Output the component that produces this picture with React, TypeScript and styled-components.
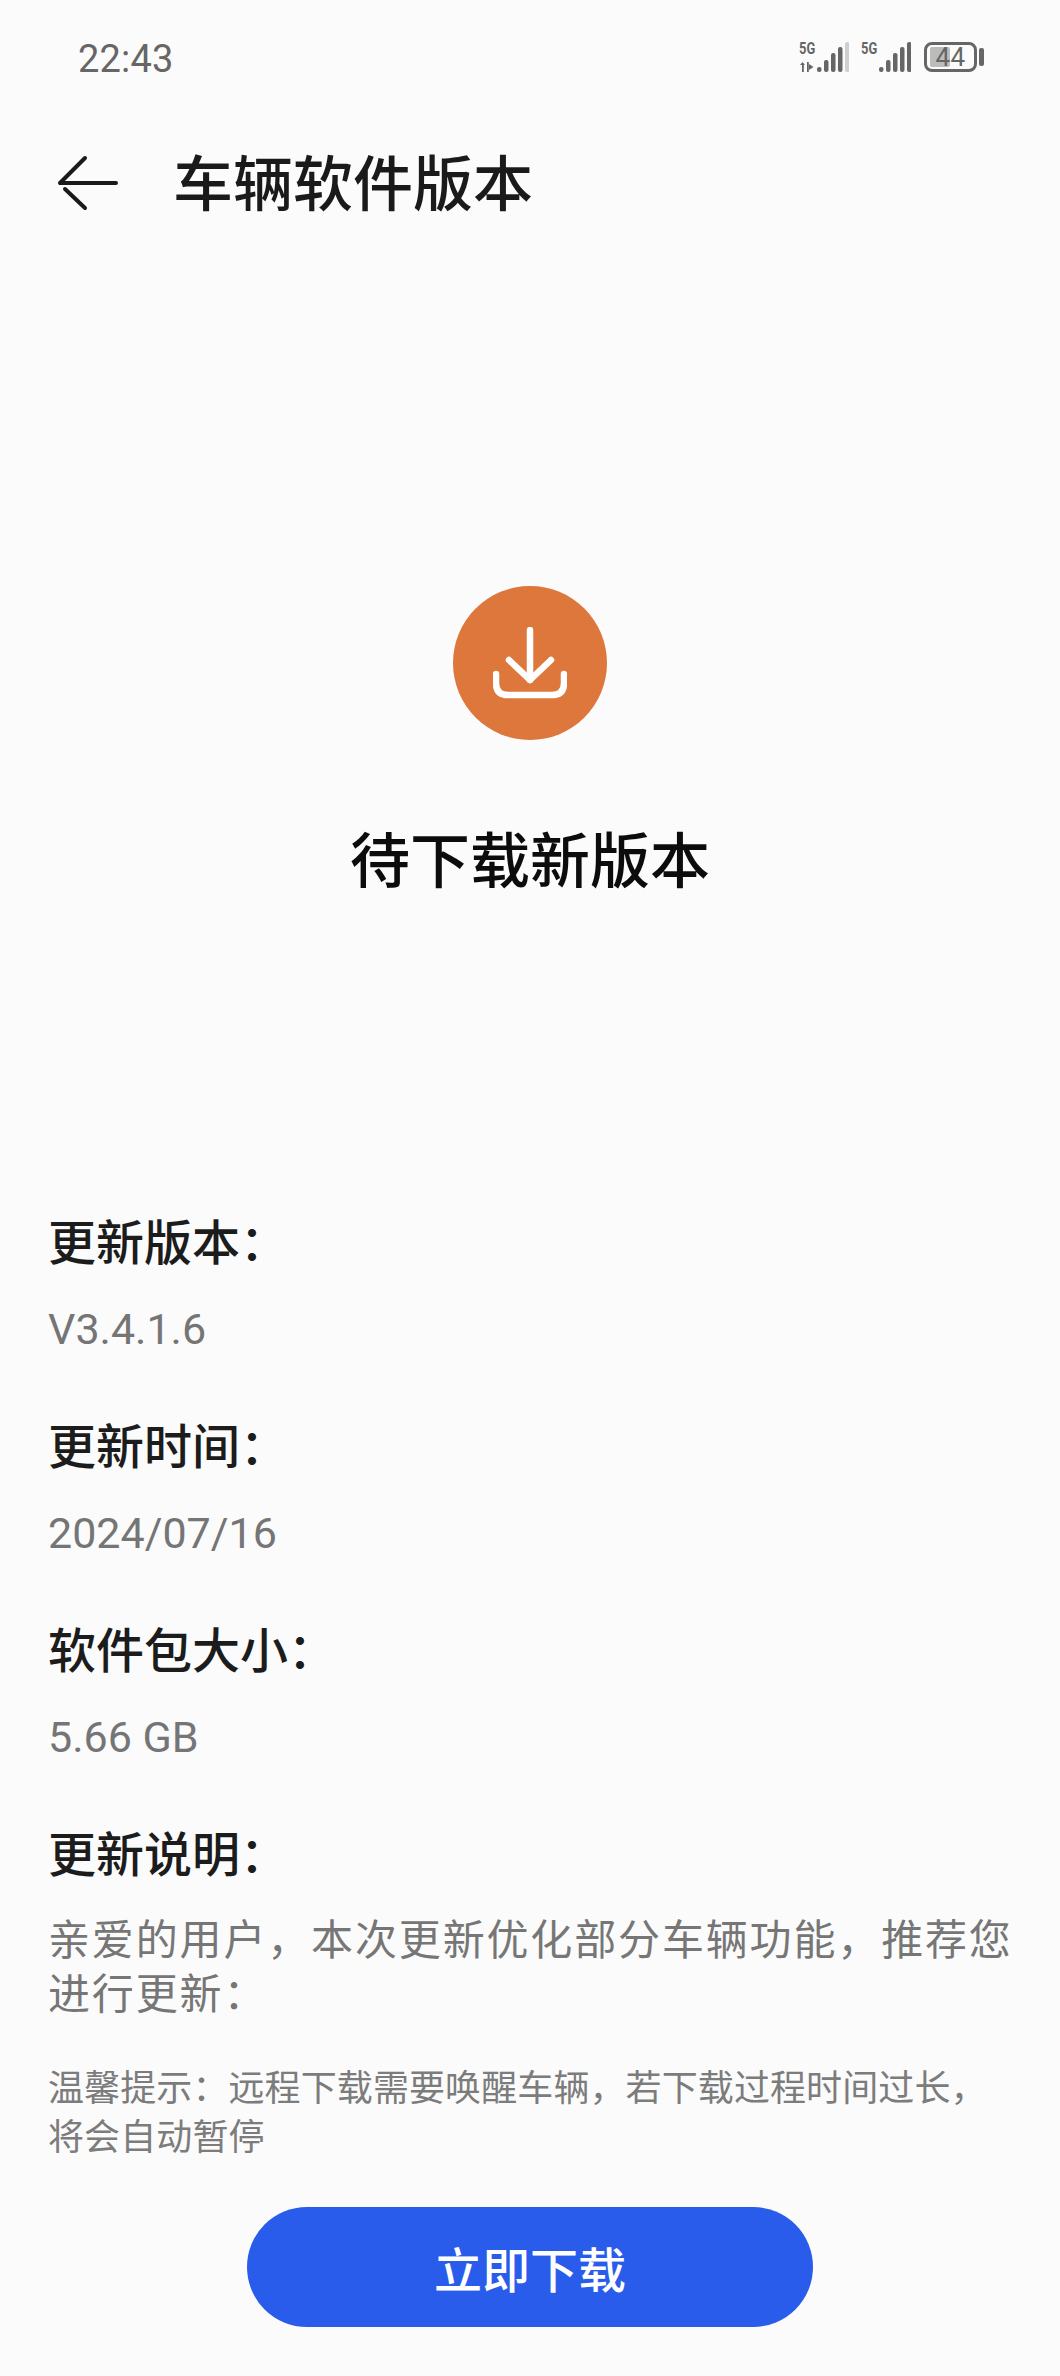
import React from "react";
import styled, { createGlobalStyle } from "styled-components";

const Global = createGlobalStyle`
  html, body { margin: 0; padding: 0; background: #fbfbfb; }
  * { box-sizing: border-box; }
`;
const FONT = `"Noto Sans CJK SC", "Noto Sans", sans-serif`;
const Page = styled.div`
  width: 1060px; height: 2376px; background: #fbfbfb; font-family: ${FONT};
  display: flex; flex-direction: column;
`;
const StatusBar = styled.div`
  height: 127px; padding: 35px 76px 0 78px; display: flex; justify-content: space-between; align-items: flex-start;
`;
const Time = styled.div`
  font-family: Roboto, sans-serif; font-size: 38px; line-height: 48px; color: #666; letter-spacing: 0.2px;
`;
const Header = styled.div`
  height: 112px; padding: 0 0 0 56px; display: flex; align-items: center; gap: 53px;
`;
const Title = styled.h1`
  margin: 0 0 6px; font-size: 60px; font-weight: 500; line-height: 80px; color: #1a1a1a;
`;
const Hero = styled.div`
  margin-top: 347px; display: flex; flex-direction: column; align-items: center; height: 621px;
`;
const Circle = styled.div`
  width: 154px; height: 154px; border-radius: 50%; background: #dd773b; display: flex; align-items: center; justify-content: center;
`;
const HeroTitle = styled.h2`
  margin: 75px 0 0; font-size: 60px; font-weight: 500; line-height: 84px; color: #0c0c0c;
`;
const Info = styled.div`
  padding: 0 42px 0 48px; display: flex; flex-direction: column;
`;
const Label = styled.div`
  font-size: 48px; font-weight: 500; line-height: 64px; color: #1c1c1c;
`;
const Value = styled.div`
  font-family: Roboto, ${FONT}; font-size: 43px; line-height: 54px; margin: 31px 0 55px; color: #757575;
`;
const Desc = styled.div`
  font-size: 42px; line-height: 54px; margin-top: 27px; color: #767676; letter-spacing: 1.85px;
`;
const Tip = styled.div`
  font-size: 36px; line-height: 49px; margin-top: 43px; color: #7c7c7c; letter-spacing: 0.1px;
`;
const Button = styled.button`
  align-self: center; margin-top: 48px; width: 566px; height: 120px; border: 0; border-radius: 60px;
  background: #295ceb; color: #fff; font-family: ${FONT}; font-size: 48px; font-weight: 500;
`;

const Icons = styled.div`
  display: flex; align-items: flex-start; margin-top: 7px; gap: 12px;
`;
const Signal = styled.div`
  display: flex; align-items: flex-end; width: 50px; height: 30px;
`;
const NetColumn = styled.div`
  width: 17px; height: 30px; display: flex; flex-direction: column; justify-content: space-between; flex: none;
`;
const FiveG = styled.span`
  font-family: Roboto, sans-serif; font-weight: 700; font-size: 17px; line-height: 13px; height: 13px; color: #666;
  transform: scaleX(0.76); transform-origin: left; white-space: nowrap;
`;
const BatteryGroup = styled.div`
  display: flex; align-items: center; gap: 2px; height: 30px; margin-left: 1px;
`;
const Battery = styled.div`
  position: relative; width: 53px; height: 30px; border: 3px solid #666; border-radius: 8px;
  display: flex; align-items: center; justify-content: center; font-family: Roboto, sans-serif; font-size: 26px; color: #666;
`;
const Fill = styled.div`
  position: absolute; left: 3px; top: 2px; bottom: 2px; width: 20px; background: #bcbcbc; border-radius: 2px;
`;
const BatteryText = styled.span`
  position: relative; letter-spacing: 0.5px; line-height: 24px;
`;
const Cap = styled.div`
  width: 5px; height: 18px; background: #666; border-radius: 2px;
`;

const BAR_TOPS = [25, 18, 11, 5, 0];

const Bars = ({ lastDim }: { lastDim?: boolean }) => (
  <svg width="33" height="30" viewBox="0 0 33 30">
    {BAR_TOPS.map((y, i) => (
      <rect key={i} x={i * 7 + 1} y={y} width="4.5" height={30 - y} rx="2" fill={lastDim && i === 4 ? "#cfcfcf" : "#666"} />
    ))}
  </svg>
);

const Transfer = () => (
  <svg width="17" height="10" viewBox="0 0 17 10" fill="#666">
    <path d="M3.5 0 L6 3 H4.8 V10 H3 V3 H1 Z" />
    <rect x="8" y="0" width="1.8" height="10" />
    <path d="M10 2 L14.5 5 L10 8 Z" />
  </svg>
);

export default function App() {
  return (
    <Page>
      <Global />
      <StatusBar>
        <Time>22:43</Time>
        <Icons>
          <Signal>
            <NetColumn>
              <FiveG>5G</FiveG>
              <Transfer />
            </NetColumn>
            <Bars lastDim />
          </Signal>
          <Signal>
            <NetColumn>
              <FiveG>5G</FiveG>
            </NetColumn>
            <Bars />
          </Signal>
          <BatteryGroup>
            <Battery><Fill /><BatteryText>44</BatteryText></Battery>
            <Cap />
          </BatteryGroup>
        </Icons>
      </StatusBar>
      <Header>
        <svg width="64" height="60" viewBox="0 0 64 60" fill="none" stroke="#1a1a1a" strokeWidth="4" strokeLinecap="round" strokeLinejoin="round">
          <path d="M29 5 L4 30 H60" />
          <path d="M9 36 L29 55" />
        </svg>
        <Title>车辆软件版本</Title>
      </Header>
      <Hero>
        <Circle>
          <svg width="74" height="72" viewBox="0 0 74 72" fill="none" stroke="#fff" strokeWidth="6.5" strokeLinecap="round" strokeLinejoin="round">
            <path d="M37 3 V53" />
            <path d="M16 33 L37 53 L58 33" />
            <path d="M3 47 V56 Q3 68 15 68 H59 Q71 68 71 56 V47" />
          </svg>
        </Circle>
        <HeroTitle>待下载新版本</HeroTitle>
      </Hero>
      <Info>
        <Label>更新版本：</Label>
        <Value>V3.4.1.6</Value>
        <Label>更新时间：</Label>
        <Value>2024/07/16</Value>
        <Label>软件包大小：</Label>
        <Value>5.66 GB</Value>
        <Label>更新说明：</Label>
        <Desc>亲爱的用户，本次更新优化部分车辆功能，推荐您进行更新：</Desc>
        <Tip>温馨提示：远程下载需要唤醒车辆，若下载过程时间过长，将会自动暂停</Tip>
      </Info>
      <Button>立即下载</Button>
    </Page>
  );
}
